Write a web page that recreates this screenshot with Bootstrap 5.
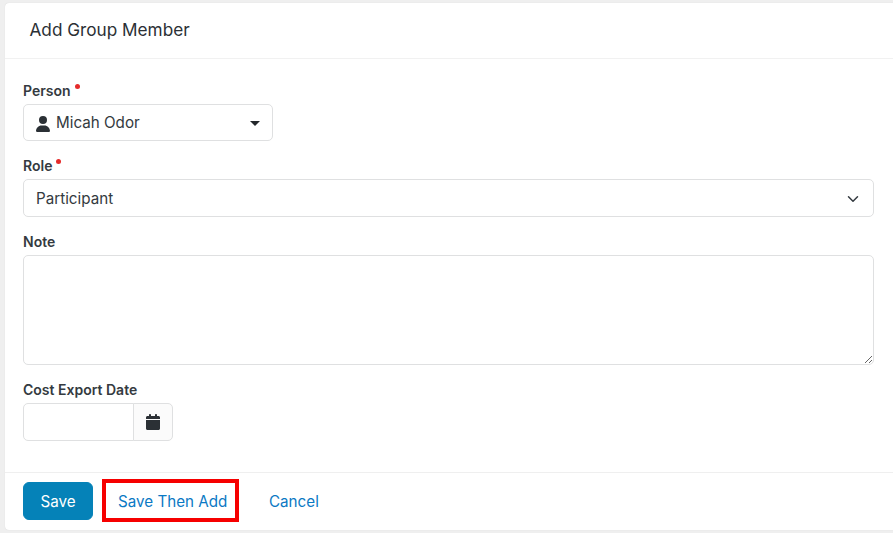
<!DOCTYPE html>
<html lang="en">
<head>
    <meta charset="UTF-8">
    <title>Add Group Member</title>
    <link href="https://cdn.jsdelivr.net/npm/bootstrap@5.3.3/dist/css/bootstrap.min.css" rel="stylesheet">
    <style>
        html, body { height: 533px; overflow: hidden; }
        body {
            background: #efefef;
            font-family: "Inter", "Liberation Sans", sans-serif;
            font-size: 15.2px;
            color: #343a40;
            padding: 3px 0 3px 5px;
        }
        .panel-box {
            width: 893px;
            height: 527px;
            background: #fff;
            border: 0;
            border-radius: 4px 0 0 4px;
            box-shadow: 0 0 1px rgba(0,0,0,.15);
        }
        .panel-head {
            height: 56px;
            padding: 0 24.500px 2px;
            border-bottom: 1px solid #f1f1f1;
            font-size: 17.200px;
            font-weight: 400;
            color: #2b3035;
        }
        .panel-main { padding: 21px 18px 0; flex: 1 1 auto; }
        .panel-foot {
            height: 58px;
            padding: 0 18px 2px;
            border-top: 1px solid #efefef;
        }
        .field-wrap { margin-bottom: 14px; width: 851px; }
        .field-label {
            display: block;
            font-size: 14px;
            font-weight: 600;
            line-height: 22px;
            margin-bottom: 2px;
            color: #343a40;
        }
        .req-dot {
            display: inline-block;
            width: 5px;
            height: 5px;
            border-radius: 50%;
            background: #e52b2b;
            margin-left: 4px;
            vertical-align: 7px;
        }
        .field-box {
            height: 38px;
            border: 1px solid #dfe0e1;
            border-radius: 5px;
            background: #fff;
            font-size: 15.200px;
            color: #343a40;
            padding: 2px 12px 0;
        }
        .person-box { width: 250px; height: 37px; }
        .caret-down {
            width: 0;
            height: 0;
            border-left: 5px solid transparent;
            border-right: 5px solid transparent;
            border-top: 5px solid #23272b;
        }
        .chevron-icon { margin-right: 2px; }
        .note-box { height: 110px; resize: vertical; display: block; width: 100%; box-shadow: none; }
        .date-group { width: 150px; height: 38px; }
        .date-group .date-input {
            width: 111px;
            flex: none;
            border: 1px solid #dfe0e1;
            border-radius: 5px 0 0 5px;
            height: 38px;
        }
        .date-group .date-btn {
            width: 40px;
            padding: 0;
            margin-left: -1px;
            border: 1px solid #dfe0e1;
            border-radius: 0 5px 5px 0;
            background: #fbfbfb;
            height: 38px;
        }
        .save-btn {
            width: 70px;
            height: 38px;
            padding: 3px 0 0;
            font-size: 15.200px;
            background: #0582b8;
            border-color: #0582b8;
            color: #fff;
            border-radius: 6px;
        }
        .save-btn:hover { background: #0582b8; color: #fff; }
        .link-action {
            font-size: 15.200px;
            color: #0b79c4;
            text-decoration: none;
        }
        .mark-box {
            width: 137px;
            height: 43px;
            margin-left: 9px;
            padding: 3px 0 0 12px;
            border: 4px solid #f60000;
        }
        .cancel-link { margin-left: 30px; padding-top: 3px; }
        .person-name { margin-left: 2px; }
    </style>
</head>
<body>
    <div class="panel-box d-flex flex-column">
        <div class="panel-head d-flex align-items-center">Add Group Member</div>

        <div class="panel-main">
            <div class="field-wrap">
                <label class="field-label">Person<span class="req-dot"></span></label>
                <div class="field-box person-box d-flex align-items-center">
                    <svg width="14" height="16" viewBox="0 0 448 512" class="me-1" fill="#2b3035"><path d="M224 256a128 128 0 1 0 0-256 128 128 0 1 0 0 256zm-45.700 48C79.800 304 0 383.800 0 482.300 0 498.700 13.300 512 29.700 512h388.600c16.400 0 29.700-13.300 29.700-29.700C448 383.800 368.200 304 269.700 304h-91.400z"/></svg>
                    <span class="person-name">Micah Odor</span>
                    <span class="caret-down ms-auto"></span>
                </div>
            </div>

            <div class="field-wrap">
                <label class="field-label">Role<span class="req-dot"></span></label>
                <div class="field-box d-flex align-items-center">
                    <span>Participant</span>
                    <svg width="12" height="12" viewBox="0 0 16 16" class="ms-auto chevron-icon" fill="none" stroke="#343a40" stroke-width="2" stroke-linecap="round" stroke-linejoin="round"><path d="M2 5l6 6 6-6"/></svg>
                </div>
            </div>

            <div class="field-wrap">
                <label class="field-label">Note</label>
                <textarea class="form-control field-box note-box"></textarea>
            </div>

            <div class="field-wrap">
                <label class="field-label">Cost Export Date</label>
                <div class="d-flex date-group">
                    <input type="text" class="form-control date-input">
                    <button type="button" class="btn date-btn d-flex align-items-center justify-content-center">
                        <svg width="14" height="16" viewBox="0 0 448 512" fill="#2b3035"><path d="M128 0c17.700 0 32 14.300 32 32v32h128V32c0-17.700 14.300-32 32-32s32 14.300 32 32v32h48c26.500 0 48 21.500 48 48v48H0v-48c0-26.500 21.500-48 48-48h48V32c0-17.700 14.300-32 32-32zM0 192h448v272c0 26.500-21.500 48-48 48H48c-26.500 0-48-21.500-48-48V192z"/></svg>
                    </button>
                </div>
            </div>
        </div>

        <div class="panel-foot d-flex align-items-center">
            <button type="button" class="btn save-btn">Save</button>
            <div class="mark-box d-flex align-items-center">
                <a href="#" class="link-action">Save Then Add</a>
            </div>
            <a href="#" class="link-action cancel-link">Cancel</a>
        </div>
    </div>
</body>
</html>
